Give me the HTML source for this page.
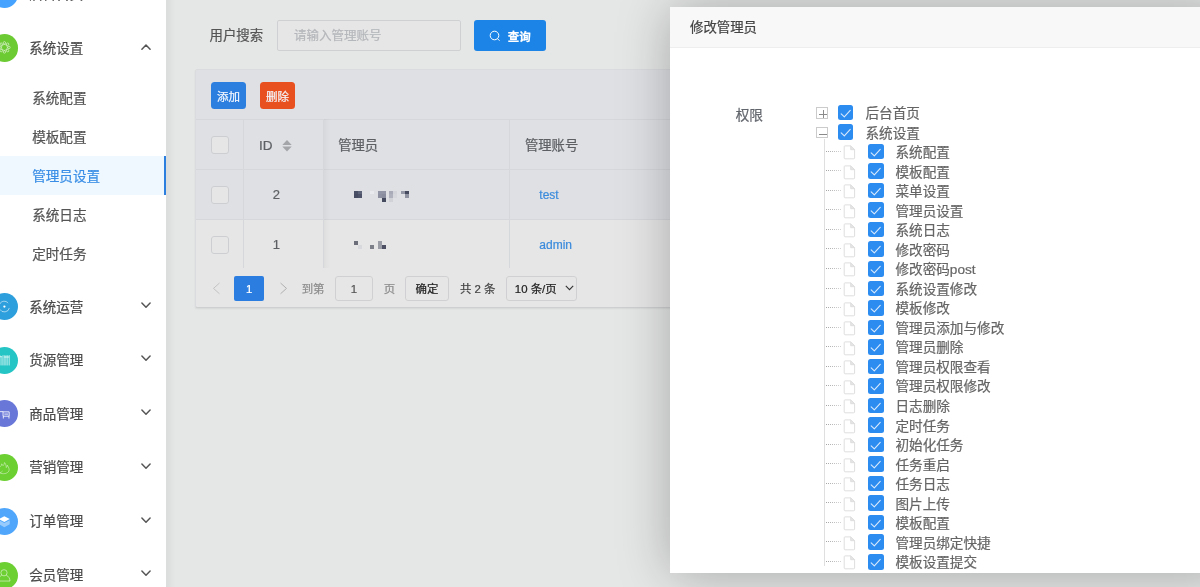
<!DOCTYPE html>
<html lang="zh-CN"><head><meta charset="utf-8"><title>管理员设置</title>
<style>
*{margin:0;padding:0;box-sizing:border-box}
html,body{width:1200px;height:587px;overflow:hidden}
body{position:relative;background:#e5e6e6;font-family:"Liberation Sans","Noto Sans CJK SC",sans-serif;color:#555;-webkit-text-stroke:.22px currentColor}
i{font-style:normal;display:block}
span,svg,div{position:absolute}
#side{left:0;top:0;width:166px;height:587px;background:#fff;overflow:hidden}
.ic{left:-9.35px;width:27.2px;height:27.2px;border-radius:50%;overflow:hidden}
.ic svg{left:0;top:0}
.ml{left:29.2px;font-size:13.5px;line-height:20px;color:#4a4a4a;white-space:nowrap}
.sl{left:32.2px;font-size:13.6px;line-height:20px;color:#555;white-space:nowrap}
.sl.on{color:#3a8ee6}
.act{left:0;width:166px;height:38.9px;background:#eff8ff;border-right:2px solid #2d7fdf}
.chev{left:140.3px}
#main{left:166px;top:0;width:1034px;height:587px;overflow:hidden}
.lbl{left:209.5px;top:26px;font-size:13.4px;line-height:20px;color:#555;white-space:nowrap}
.inp{left:277px;top:19.5px;width:183.5px;height:31.3px;border:1px solid #cfd0d2;border-radius:2px;background:#e6e6e6}
.inp span{left:16px;top:5px;font-size:12.5px;line-height:20px;color:#b5b7bb;white-space:nowrap}
.sbtn{left:474.2px;top:19.5px;width:72.2px;height:31.7px;border-radius:3px;background:#1c84e6;color:#fff}
.sbtn span{left:33.5px;top:7px;font-size:11.5px;font-weight:bold;line-height:20px;white-space:nowrap}
.card{left:194.8px;top:68.5px;width:1010px;height:239.9px;background:#e6e6e6;border:1px solid #dadbde;border-bottom-color:#cecfd1;border-radius:2.5px;overflow:hidden;box-shadow:0 1px 2px rgba(0,0,0,.07)}
.tb{left:0;top:0;width:100%;height:50.5px;background:#dfe0e4;border-bottom:1px solid #d6d7db}
.hd{}
.btn{top:82px;width:35px;height:27.3px;border-radius:3.5px;color:#f4f8ff;font-size:11.5px;line-height:30px;text-align:center}
.r{left:195.8px;width:1010px;border-bottom:1px solid #d6d7db}
.vs{width:1px;background:#d6d7db;top:119.3px;height:148.5px}
.ck{left:211px;width:17.5px;height:17.5px;border:1px solid #cdced1;border-radius:3px;background:#e6e6e6}
.th{font-size:13.3px;line-height:20px;color:#5d6064;white-space:nowrap}
.td{font-size:13px;line-height:20px;color:#5d6064;white-space:nowrap}
.lk{font-size:12px;line-height:20px;color:#3b8bdc;white-space:nowrap}
.pg{font-size:11.4px;line-height:27px;white-space:nowrap;top:275.5px;height:25px}
.bx{border:1px solid #d0d0d2;border-radius:3px;background:#e6e6e6}
#modal{left:670px;top:7px;width:560px;height:565.9px;background:#fff;box-shadow:1px 1px 50px rgba(0,0,0,.28)}
#mh{left:0;top:0;width:100%;height:40.5px;background:#f8f8f8;border-bottom:1px solid #eee}
#mh span{left:20px;top:11.4px;font-size:13.4px;line-height:20px;color:#444;white-space:nowrap}
.cb{width:15.5px;height:15.5px;border-radius:2.5px;background:#2d8cf0}
.cb svg{left:0;top:0}
.pm{width:11.7px;height:11.5px;border:1px solid #cbcbcb;margin-top:-5.75px;background:#fff;overflow:hidden}
.pm .h{position:absolute;left:1.8px;top:5.8px;width:8.6px;height:1px;background:#8a8a8a}
.pm .v{position:absolute;left:5.6px;top:1.5px;width:1px;height:9px;background:#8a8a8a}
.tl{font-size:13.6px;line-height:20px;color:#666;white-space:nowrap}
i.hd{position:absolute;left:825.8px;width:15.6px;height:1px;background:linear-gradient(to right,rgba(255,255,255,0),rgba(255,255,255,.55)),repeating-linear-gradient(to right,#a4a4a4 0,#a4a4a4 1px,#fff 1px,#fff 2.05px)}
.doc{left:843.2px}
.vd{left:824px;top:138.6px;width:1px;height:427.5px;background:#dfdfdf}
#root{left:0;top:0;width:1200px;height:587px;overflow:hidden;will-change:transform}
</style></head><body><div id="root">
<div id="side">
<span class="ic" style="top:-19.70px;background:#45a3ff"><svg width="27.2" height="27.2" viewBox="0.200 0 28 28"></svg></span><span class="ml" style="top:-15.00px">后台首页</span><svg class="chev" style="top:-11.90px" width="12" height="8" viewBox="0 0 12 8"><path d="M1.900 2.100L6 6.300L10.100 2.100" fill="none" stroke="#555" stroke-width="1.5" stroke-linecap="round" stroke-linejoin="round"/></svg>
<span class="ic" style="top:34.40px;background:#6ccb33"><svg width="27.2" height="27.2" viewBox="0.200 0 28 28"><g fill="none" stroke="#fff" stroke-opacity=".68" stroke-width=".8"><circle cx="14" cy="13.8" r="3.1"/><circle cx="18.70" cy="13.80" r="1.25"/><circle cx="17.32" cy="17.12" r="1.25"/><circle cx="14.00" cy="18.50" r="1.25"/><circle cx="10.68" cy="17.12" r="1.25"/><circle cx="9.30" cy="13.80" r="1.25"/><circle cx="10.68" cy="10.48" r="1.25"/><circle cx="14.00" cy="9.10" r="1.25"/><circle cx="17.32" cy="10.48" r="1.25"/></g></svg></span><span class="ml" style="top:38.90px">系统设置</span><svg class="chev" style="top:42.90px" width="12" height="8" viewBox="0 0 12 8"><path d="M1.900 6.300L6 2.100L10.100 6.300" fill="none" stroke="#555" stroke-width="1.5" stroke-linecap="round" stroke-linejoin="round"/></svg>
<span class="sl" style="top:89.00px">系统配置</span>
<span class="sl" style="top:128.00px">模板配置</span>
<div class="act" style="top:156.4px"></div>
<span class="sl on" style="top:167.00px">管理员设置</span>
<span class="sl" style="top:206.00px">系统日志</span>
<span class="sl" style="top:245.00px">定时任务</span>
<span class="ic" style="top:293.10px;background:#2d9fdc"><svg width="27.2" height="27.2" viewBox="0.200 0 28 28"><g fill="none" stroke="#fff" stroke-opacity=".65" stroke-width=".9"><path d="M17.9 10.4A5.300 5.300 0 0 0 9 11.6"/><path d="M19.100 15.400A5.300 5.300 0 0 1 9.300 16.800"/></g><circle cx="14" cy="14" r="1.2" fill="#fff"/></svg></span><span class="ml" style="top:297.60px">系统运营</span><svg class="chev" style="top:300.90px" width="12" height="8" viewBox="0 0 12 8"><path d="M1.900 2.100L6 6.300L10.100 2.100" fill="none" stroke="#555" stroke-width="1.5" stroke-linecap="round" stroke-linejoin="round"/></svg>
<span class="ic" style="top:346.60px;background:#25c5c5"><svg width="27.2" height="27.2" viewBox="0.200 0 28 28"><g fill="none" stroke="#fff" stroke-opacity=".85"><path stroke-width=".9" d="M13.700 8.400v10.600M16.800 8.400v10.600M18.900 8.400v10.600M13.700 10.300h5.200M9.300 10h2.200M9.300 8.400v10.600"/><path stroke-width=".6" d="M12.200 8.600v10.400M15.300 8.600v10.400M10.800 10v9"/></g></svg></span><span class="ml" style="top:351.10px">货源管理</span><svg class="chev" style="top:354.40px" width="12" height="8" viewBox="0 0 12 8"><path d="M1.900 2.100L6 6.300L10.100 2.100" fill="none" stroke="#555" stroke-width="1.5" stroke-linecap="round" stroke-linejoin="round"/></svg>
<span class="ic" style="top:400.20px;background:#6877d8"><svg width="27.2" height="27.2" viewBox="0.200 0 28 28"><g fill="none" stroke="#fff" stroke-opacity=".85" stroke-width="1"><path d="M9.500 12h3.100v4.700h6.300v-4.500h-6.300"/><path d="M13.900 14.500h3.900"/><path d="M12.900 16.700v2.400M18.700 16.700v2.400"/></g></svg></span><span class="ml" style="top:404.70px">商品管理</span><svg class="chev" style="top:408.00px" width="12" height="8" viewBox="0 0 12 8"><path d="M1.900 2.100L6 6.300L10.100 2.100" fill="none" stroke="#555" stroke-width="1.5" stroke-linecap="round" stroke-linejoin="round"/></svg>
<span class="ic" style="top:453.70px;background:#6ccf32"><svg width="27.2" height="27.2" viewBox="0.200 0 28 28"><g fill="none" stroke="#fff" stroke-opacity=".5" stroke-width=".9" stroke-linejoin="round"><path d="M9 19.400C12 21 17.400 20.600 18.700 17.200C19.300 15.400 18.300 13.600 17 11.600C16.900 12.800 16.500 13.600 15.900 14C15.900 12 15.300 10 14.200 8.800C14.100 10.200 13.400 11.200 12.600 12C12.300 11.200 11.800 10.600 11.200 10.200C11.200 11.400 10.600 12.400 9.800 13.200"/><path d="M9.500 19.200c1.100-.3 2-.9 2.600-1.700"/></g></svg></span><span class="ml" style="top:458.20px">营销管理</span><svg class="chev" style="top:461.50px" width="12" height="8" viewBox="0 0 12 8"><path d="M1.900 2.100L6 6.300L10.100 2.100" fill="none" stroke="#555" stroke-width="1.5" stroke-linecap="round" stroke-linejoin="round"/></svg>
<span class="ic" style="top:507.70px;background:#4fa6fb"><svg width="27.2" height="27.2" viewBox="0.200 0 28 28"><path d="M13.900 8.500L19.500 11.400L13.900 14.300L8.300 11.400z" fill="#fff"/><path d="M8.300 12.600L13.900 15.500L19.500 12.600V16.700L13.900 19.700L8.300 16.700z" fill="#fff" fill-opacity=".42"/></svg></span><span class="ml" style="top:512.20px">订单管理</span><svg class="chev" style="top:515.50px" width="12" height="8" viewBox="0 0 12 8"><path d="M1.900 2.100L6 6.300L10.100 2.100" fill="none" stroke="#555" stroke-width="1.5" stroke-linecap="round" stroke-linejoin="round"/></svg>
<span class="ic" style="top:561.50px;background:#6ccf32"><svg width="27.2" height="27.2" viewBox="0.200 0 28 28"><g fill="none" stroke="#fff" stroke-opacity=".6" stroke-width=".9"><circle cx="13.600" cy="11.100" r="3.200"/><path d="M15.900 13.500C18.300 14.700 19.700 16.900 19.800 19.600H7.400C7.500 16.900 8.900 14.700 11.300 13.500"/></g></svg></span><span class="ml" style="top:566.00px">会员管理</span><svg class="chev" style="top:569.30px" width="12" height="8" viewBox="0 0 12 8"><path d="M1.900 2.100L6 6.300L10.100 2.100" fill="none" stroke="#555" stroke-width="1.5" stroke-linecap="round" stroke-linejoin="round"/></svg>
</div>
<div style="left:166px;top:0;width:9px;height:587px;background:linear-gradient(to right,rgba(0,0,0,.045),rgba(0,0,0,0))"></div>
<span class="lbl">用户搜索</span>
<div class="inp"><span>请输入管理账号</span></div>
<div class="sbtn"><svg style="left:15px;top:10.5px" width="12" height="12" viewBox="0 0 12 12"><circle cx="5.5" cy="5.5" r="4.3" fill="none" stroke="#fff" stroke-width="1"/><path d="M8.6 8.8l1.6 1.6" stroke="#fff" stroke-width="1" stroke-linecap="round"/></svg><span>查询</span></div>
<div class="card"><div class="tb"></div></div>
<div class="btn" style="left:211px;background:#2d7fdf">添加</div>
<div class="btn" style="left:260px;background:#e8501f">删除</div>
<div class="r" style="top:119.3px;height:50.3px;background:#dfe0e4;border-top:1px solid #d6d7db"></div>
<div class="r" style="top:169.6px;height:50px;background:#dfe0e4"></div>
<div class="r" style="top:219.6px;height:48.5px;background:#e6e6e6;border-bottom:0"></div>
<div style="left:195.8px;top:119.3px;width:400px;height:148.6px;overflow:hidden"><div style="left:-20px;top:-20px;width:147.700px;height:200px;box-shadow:1px 0 7px rgba(0,0,0,.075)"></div></div><div class="vs" style="left:243px"></div><div class="vs" style="left:323px"></div><div class="vs" style="left:509px"></div>
<div class="ck" style="top:136.3px"></div><div class="ck" style="top:186.3px"></div><div class="ck" style="top:236.3px"></div>
<span class="th" style="left:258.900px;top:136px;font-size:13.500px">ID</span>
<svg style="left:282px;top:139.5px" width="10" height="12" viewBox="0 0 10 12"><path d="M0.300 5L5 0L9.700 5z" fill="#a3a5a9"/><path d="M0.300 6.600L5 11.600L9.700 6.600z" fill="#a3a5a9"/></svg>
<span class="th" style="left:338.2px;top:136px">管理员</span>
<span class="th" style="left:525px;top:136px">管理账号</span>
<span class="td" style="left:272.7px;top:184.7px">2</span>
<span class="td" style="left:272.7px;top:234.700px">1</span>
<i style="position:absolute;left:354.30px;top:190.50px;width:3.96px;height:3.83px;background:#4a5066"></i><i style="position:absolute;left:358.21px;top:190.50px;width:3.96px;height:3.83px;background:#5d6378"></i><i style="position:absolute;left:354.30px;top:194.28px;width:3.96px;height:3.83px;background:#474c62"></i><i style="position:absolute;left:358.21px;top:194.28px;width:3.96px;height:3.83px;background:#4e5369"></i><i style="position:absolute;left:369.94px;top:190.50px;width:3.96px;height:3.83px;background:#e9eaed"></i><i style="position:absolute;left:377.76px;top:190.50px;width:3.96px;height:3.83px;background:#9295a5"></i><i style="position:absolute;left:381.67px;top:190.50px;width:3.96px;height:3.83px;background:#9295a5"></i><i style="position:absolute;left:377.76px;top:194.28px;width:3.96px;height:3.83px;background:#8e91a1"></i><i style="position:absolute;left:381.67px;top:194.28px;width:3.96px;height:3.83px;background:#8a8d9d"></i><i style="position:absolute;left:381.67px;top:198.06px;width:3.96px;height:3.83px;background:#454a5e"></i><i style="position:absolute;left:389.49px;top:190.50px;width:3.96px;height:3.83px;background:#a9acb8"></i><i style="position:absolute;left:389.49px;top:194.28px;width:3.96px;height:3.83px;background:#b0b3be"></i><i style="position:absolute;left:393.40px;top:190.50px;width:3.96px;height:3.83px;background:#d3d5da"></i><i style="position:absolute;left:393.40px;top:194.28px;width:3.96px;height:3.83px;background:#d6d8dd"></i><i style="position:absolute;left:389.49px;top:198.06px;width:3.96px;height:3.83px;background:#d0d2d8"></i><i style="position:absolute;left:401.22px;top:190.50px;width:3.96px;height:3.83px;background:#9497a6"></i><i style="position:absolute;left:405.13px;top:190.50px;width:3.96px;height:3.83px;background:#454a5e"></i><i style="position:absolute;left:405.13px;top:194.28px;width:3.96px;height:3.83px;background:#8f92a0"></i><i style="position:absolute;left:354.30px;top:241.20px;width:3.96px;height:3.83px;background:#6b6e78"></i><i style="position:absolute;left:358.21px;top:244.98px;width:3.96px;height:3.83px;background:#d8d9dc"></i><i style="position:absolute;left:369.94px;top:244.98px;width:3.96px;height:3.83px;background:#7c7f88"></i><i style="position:absolute;left:377.76px;top:241.20px;width:3.96px;height:3.83px;background:#9a9ca6"></i><i style="position:absolute;left:377.76px;top:244.98px;width:3.96px;height:3.83px;background:#9a9ca6"></i><i style="position:absolute;left:381.67px;top:244.98px;width:3.96px;height:3.83px;background:#4d5062"></i>
<span class="lk" style="left:539.3px;top:185px">test</span>
<span class="lk" style="left:539.3px;top:235px">admin</span>
<svg style="left:211.500px;top:282px" width="9" height="13" viewBox="0 0 9 13"><path d="M7.500 1L1.500 6.400L7.500 11.800" fill="none" stroke="#c2c2c2" stroke-width="1"/></svg>
<div class="pg" style="left:234.3px;width:29.7px;background:#2b7de0;color:#fff;text-align:center;border-radius:2px">1</div>
<svg style="left:278.500px;top:282px" width="9" height="13" viewBox="0 0 9 13"><path d="M1.500 1L7.500 6.400L1.500 11.800" fill="none" stroke="#b0b0b0" stroke-width="1"/></svg>
<span class="pg" style="left:301.700px;color:#8c8c8c">到第</span>
<div class="pg bx" style="left:335px;width:38px;text-align:center;color:#555;line-height:25px">1</div>
<span class="pg" style="left:383.700px;color:#8c8c8c">页</span>
<div class="pg bx" style="left:404.500px;width:44.800px;text-align:center;color:#222;line-height:25px">确定</div>
<span class="pg" style="left:460px;color:#444">共 2 条</span>
<div class="pg bx" style="left:506.300px;width:70.500px;color:#222;line-height:25px"><span style="left:7.500px;top:0;position:absolute">10 条/页</span><svg style="left:57.500px;top:8.500px" width="9" height="6" viewBox="0 0 9 6"><path d="M0.800 0.800L4.500 4.600L8.200 0.800" fill="none" stroke="#333" stroke-width="1.100"/></svg></div>
<div id="modal"><div id="mh"><span>修改管理员</span></div></div>
<span class="tl" style="left:735.7px;top:105.9px;color:#62666c">权限</span>
<i class="vd" style="position:absolute"></i>
<span class="pm" style="left:816.3px;top:113.00px"><i class="h"></i><i class="v"></i></span>
<span class="cb" style="left:837.9px;top:104.65px"><svg viewBox="0 0 15.2 15.2" width="15.5" height="15.5"><path d="M3.1 8.6l3.1 3 5.8-6.4" fill="none" stroke="#fff" stroke-opacity=".82" stroke-width="1.05" stroke-linecap="round" stroke-linejoin="round"/></svg></span>
<span class="tl" style="left:865.5px;top:104.00px">后台首页</span>
<span class="pm" style="left:816.3px;top:132.53px"><i class="h"></i></span>
<span class="cb" style="left:837.9px;top:124.18px"><svg viewBox="0 0 15.2 15.2" width="15.5" height="15.5"><path d="M3.1 8.6l3.1 3 5.8-6.4" fill="none" stroke="#fff" stroke-opacity=".82" stroke-width="1.05" stroke-linecap="round" stroke-linejoin="round"/></svg></span>
<span class="tl" style="left:865.5px;top:123.53px">系统设置</span>
<i class="hd" style="top:150.77px"></i>
<svg class="doc" style="top:145.27px" width="13" height="15" viewBox="0 0 13 15"><path d="M2 .9h5.700L11.600 4.700V13q0 .8-.8.8H2q-.8 0-.8-.8V1.700q0-.8.8-.8z" fill="#fff" stroke="#dedede" stroke-width="1"/><path d="M7.700 .9v3.800h3.900z" fill="#e6e6e6" stroke="#dedede" stroke-width="1" stroke-linejoin="round"/></svg>
<span class="cb" style="left:868px;top:143.82px"><svg viewBox="0 0 15.2 15.2" width="15.5" height="15.5"><path d="M3.1 8.6l3.1 3 5.8-6.4" fill="none" stroke="#fff" stroke-opacity=".82" stroke-width="1.05" stroke-linecap="round" stroke-linejoin="round"/></svg></span>
<span class="tl" style="left:895.5px;top:143.07px">系统配置</span>
<i class="hd" style="top:170.30px"></i>
<svg class="doc" style="top:164.80px" width="13" height="15" viewBox="0 0 13 15"><path d="M2 .9h5.700L11.600 4.700V13q0 .8-.8.8H2q-.8 0-.8-.8V1.700q0-.8.8-.8z" fill="#fff" stroke="#dedede" stroke-width="1"/><path d="M7.700 .9v3.800h3.900z" fill="#e6e6e6" stroke="#dedede" stroke-width="1" stroke-linejoin="round"/></svg>
<span class="cb" style="left:868px;top:163.35px"><svg viewBox="0 0 15.2 15.2" width="15.5" height="15.5"><path d="M3.1 8.6l3.1 3 5.8-6.4" fill="none" stroke="#fff" stroke-opacity=".82" stroke-width="1.05" stroke-linecap="round" stroke-linejoin="round"/></svg></span>
<span class="tl" style="left:895.5px;top:162.60px">模板配置</span>
<i class="hd" style="top:189.83px"></i>
<svg class="doc" style="top:184.33px" width="13" height="15" viewBox="0 0 13 15"><path d="M2 .9h5.700L11.600 4.700V13q0 .8-.8.8H2q-.8 0-.8-.8V1.700q0-.8.8-.8z" fill="#fff" stroke="#dedede" stroke-width="1"/><path d="M7.700 .9v3.800h3.900z" fill="#e6e6e6" stroke="#dedede" stroke-width="1" stroke-linejoin="round"/></svg>
<span class="cb" style="left:868px;top:182.88px"><svg viewBox="0 0 15.2 15.2" width="15.5" height="15.5"><path d="M3.1 8.6l3.1 3 5.8-6.4" fill="none" stroke="#fff" stroke-opacity=".82" stroke-width="1.05" stroke-linecap="round" stroke-linejoin="round"/></svg></span>
<span class="tl" style="left:895.5px;top:182.13px">菜单设置</span>
<i class="hd" style="top:209.37px"></i>
<svg class="doc" style="top:203.87px" width="13" height="15" viewBox="0 0 13 15"><path d="M2 .9h5.700L11.600 4.700V13q0 .8-.8.8H2q-.8 0-.8-.8V1.700q0-.8.8-.8z" fill="#fff" stroke="#dedede" stroke-width="1"/><path d="M7.700 .9v3.800h3.900z" fill="#e6e6e6" stroke="#dedede" stroke-width="1" stroke-linejoin="round"/></svg>
<span class="cb" style="left:868px;top:202.42px"><svg viewBox="0 0 15.2 15.2" width="15.5" height="15.5"><path d="M3.1 8.6l3.1 3 5.8-6.4" fill="none" stroke="#fff" stroke-opacity=".82" stroke-width="1.05" stroke-linecap="round" stroke-linejoin="round"/></svg></span>
<span class="tl" style="left:895.5px;top:201.67px">管理员设置</span>
<i class="hd" style="top:228.90px"></i>
<svg class="doc" style="top:223.40px" width="13" height="15" viewBox="0 0 13 15"><path d="M2 .9h5.700L11.600 4.700V13q0 .8-.8.8H2q-.8 0-.8-.8V1.700q0-.8.8-.8z" fill="#fff" stroke="#dedede" stroke-width="1"/><path d="M7.700 .9v3.800h3.900z" fill="#e6e6e6" stroke="#dedede" stroke-width="1" stroke-linejoin="round"/></svg>
<span class="cb" style="left:868px;top:221.95px"><svg viewBox="0 0 15.2 15.2" width="15.5" height="15.5"><path d="M3.1 8.6l3.1 3 5.8-6.4" fill="none" stroke="#fff" stroke-opacity=".82" stroke-width="1.05" stroke-linecap="round" stroke-linejoin="round"/></svg></span>
<span class="tl" style="left:895.5px;top:221.20px">系统日志</span>
<i class="hd" style="top:248.43px"></i>
<svg class="doc" style="top:242.93px" width="13" height="15" viewBox="0 0 13 15"><path d="M2 .9h5.700L11.600 4.700V13q0 .8-.8.8H2q-.8 0-.8-.8V1.700q0-.8.8-.8z" fill="#fff" stroke="#dedede" stroke-width="1"/><path d="M7.700 .9v3.800h3.900z" fill="#e6e6e6" stroke="#dedede" stroke-width="1" stroke-linejoin="round"/></svg>
<span class="cb" style="left:868px;top:241.48px"><svg viewBox="0 0 15.2 15.2" width="15.5" height="15.5"><path d="M3.1 8.6l3.1 3 5.8-6.4" fill="none" stroke="#fff" stroke-opacity=".82" stroke-width="1.05" stroke-linecap="round" stroke-linejoin="round"/></svg></span>
<span class="tl" style="left:895.5px;top:240.73px">修改密码</span>
<i class="hd" style="top:267.96px"></i>
<svg class="doc" style="top:262.46px" width="13" height="15" viewBox="0 0 13 15"><path d="M2 .9h5.700L11.600 4.700V13q0 .8-.8.8H2q-.8 0-.8-.8V1.700q0-.8.8-.8z" fill="#fff" stroke="#dedede" stroke-width="1"/><path d="M7.700 .9v3.800h3.900z" fill="#e6e6e6" stroke="#dedede" stroke-width="1" stroke-linejoin="round"/></svg>
<span class="cb" style="left:868px;top:261.01px"><svg viewBox="0 0 15.2 15.2" width="15.5" height="15.5"><path d="M3.1 8.6l3.1 3 5.8-6.4" fill="none" stroke="#fff" stroke-opacity=".82" stroke-width="1.05" stroke-linecap="round" stroke-linejoin="round"/></svg></span>
<span class="tl" style="left:895.5px;top:260.26px">修改密码post</span>
<i class="hd" style="top:287.50px"></i>
<svg class="doc" style="top:282.00px" width="13" height="15" viewBox="0 0 13 15"><path d="M2 .9h5.700L11.600 4.700V13q0 .8-.8.8H2q-.8 0-.8-.8V1.700q0-.8.8-.8z" fill="#fff" stroke="#dedede" stroke-width="1"/><path d="M7.700 .9v3.800h3.900z" fill="#e6e6e6" stroke="#dedede" stroke-width="1" stroke-linejoin="round"/></svg>
<span class="cb" style="left:868px;top:280.55px"><svg viewBox="0 0 15.2 15.2" width="15.5" height="15.5"><path d="M3.1 8.6l3.1 3 5.8-6.4" fill="none" stroke="#fff" stroke-opacity=".82" stroke-width="1.05" stroke-linecap="round" stroke-linejoin="round"/></svg></span>
<span class="tl" style="left:895.5px;top:279.80px">系统设置修改</span>
<i class="hd" style="top:307.03px"></i>
<svg class="doc" style="top:301.53px" width="13" height="15" viewBox="0 0 13 15"><path d="M2 .9h5.700L11.600 4.700V13q0 .8-.8.8H2q-.8 0-.8-.8V1.700q0-.8.8-.8z" fill="#fff" stroke="#dedede" stroke-width="1"/><path d="M7.700 .9v3.800h3.900z" fill="#e6e6e6" stroke="#dedede" stroke-width="1" stroke-linejoin="round"/></svg>
<span class="cb" style="left:868px;top:300.08px"><svg viewBox="0 0 15.2 15.2" width="15.5" height="15.5"><path d="M3.1 8.6l3.1 3 5.8-6.4" fill="none" stroke="#fff" stroke-opacity=".82" stroke-width="1.05" stroke-linecap="round" stroke-linejoin="round"/></svg></span>
<span class="tl" style="left:895.5px;top:299.33px">模板修改</span>
<i class="hd" style="top:326.56px"></i>
<svg class="doc" style="top:321.06px" width="13" height="15" viewBox="0 0 13 15"><path d="M2 .9h5.700L11.600 4.700V13q0 .8-.8.8H2q-.8 0-.8-.8V1.700q0-.8.8-.8z" fill="#fff" stroke="#dedede" stroke-width="1"/><path d="M7.700 .9v3.800h3.900z" fill="#e6e6e6" stroke="#dedede" stroke-width="1" stroke-linejoin="round"/></svg>
<span class="cb" style="left:868px;top:319.61px"><svg viewBox="0 0 15.2 15.2" width="15.5" height="15.5"><path d="M3.1 8.6l3.1 3 5.8-6.4" fill="none" stroke="#fff" stroke-opacity=".82" stroke-width="1.05" stroke-linecap="round" stroke-linejoin="round"/></svg></span>
<span class="tl" style="left:895.5px;top:318.86px">管理员添加与修改</span>
<i class="hd" style="top:346.10px"></i>
<svg class="doc" style="top:340.60px" width="13" height="15" viewBox="0 0 13 15"><path d="M2 .9h5.700L11.600 4.700V13q0 .8-.8.8H2q-.8 0-.8-.8V1.700q0-.8.8-.8z" fill="#fff" stroke="#dedede" stroke-width="1"/><path d="M7.700 .9v3.800h3.900z" fill="#e6e6e6" stroke="#dedede" stroke-width="1" stroke-linejoin="round"/></svg>
<span class="cb" style="left:868px;top:339.15px"><svg viewBox="0 0 15.2 15.2" width="15.5" height="15.5"><path d="M3.1 8.6l3.1 3 5.8-6.4" fill="none" stroke="#fff" stroke-opacity=".82" stroke-width="1.05" stroke-linecap="round" stroke-linejoin="round"/></svg></span>
<span class="tl" style="left:895.5px;top:338.40px">管理员删除</span>
<i class="hd" style="top:365.63px"></i>
<svg class="doc" style="top:360.13px" width="13" height="15" viewBox="0 0 13 15"><path d="M2 .9h5.700L11.600 4.700V13q0 .8-.8.8H2q-.8 0-.8-.8V1.700q0-.8.8-.8z" fill="#fff" stroke="#dedede" stroke-width="1"/><path d="M7.700 .9v3.800h3.900z" fill="#e6e6e6" stroke="#dedede" stroke-width="1" stroke-linejoin="round"/></svg>
<span class="cb" style="left:868px;top:358.68px"><svg viewBox="0 0 15.2 15.2" width="15.5" height="15.5"><path d="M3.1 8.6l3.1 3 5.8-6.4" fill="none" stroke="#fff" stroke-opacity=".82" stroke-width="1.05" stroke-linecap="round" stroke-linejoin="round"/></svg></span>
<span class="tl" style="left:895.5px;top:357.93px">管理员权限查看</span>
<i class="hd" style="top:385.16px"></i>
<svg class="doc" style="top:379.66px" width="13" height="15" viewBox="0 0 13 15"><path d="M2 .9h5.700L11.600 4.700V13q0 .8-.8.8H2q-.8 0-.8-.8V1.700q0-.8.8-.8z" fill="#fff" stroke="#dedede" stroke-width="1"/><path d="M7.700 .9v3.800h3.900z" fill="#e6e6e6" stroke="#dedede" stroke-width="1" stroke-linejoin="round"/></svg>
<span class="cb" style="left:868px;top:378.21px"><svg viewBox="0 0 15.2 15.2" width="15.5" height="15.5"><path d="M3.1 8.6l3.1 3 5.8-6.4" fill="none" stroke="#fff" stroke-opacity=".82" stroke-width="1.05" stroke-linecap="round" stroke-linejoin="round"/></svg></span>
<span class="tl" style="left:895.5px;top:377.46px">管理员权限修改</span>
<i class="hd" style="top:404.69px"></i>
<svg class="doc" style="top:399.19px" width="13" height="15" viewBox="0 0 13 15"><path d="M2 .9h5.700L11.600 4.700V13q0 .8-.8.8H2q-.8 0-.8-.8V1.700q0-.8.8-.8z" fill="#fff" stroke="#dedede" stroke-width="1"/><path d="M7.700 .9v3.800h3.900z" fill="#e6e6e6" stroke="#dedede" stroke-width="1" stroke-linejoin="round"/></svg>
<span class="cb" style="left:868px;top:397.75px"><svg viewBox="0 0 15.2 15.2" width="15.5" height="15.5"><path d="M3.1 8.6l3.1 3 5.8-6.4" fill="none" stroke="#fff" stroke-opacity=".82" stroke-width="1.05" stroke-linecap="round" stroke-linejoin="round"/></svg></span>
<span class="tl" style="left:895.5px;top:397.00px">日志删除</span>
<i class="hd" style="top:424.23px"></i>
<svg class="doc" style="top:418.73px" width="13" height="15" viewBox="0 0 13 15"><path d="M2 .9h5.700L11.600 4.700V13q0 .8-.8.8H2q-.8 0-.8-.8V1.700q0-.8.8-.8z" fill="#fff" stroke="#dedede" stroke-width="1"/><path d="M7.700 .9v3.800h3.900z" fill="#e6e6e6" stroke="#dedede" stroke-width="1" stroke-linejoin="round"/></svg>
<span class="cb" style="left:868px;top:417.28px"><svg viewBox="0 0 15.2 15.2" width="15.5" height="15.5"><path d="M3.1 8.6l3.1 3 5.8-6.4" fill="none" stroke="#fff" stroke-opacity=".82" stroke-width="1.05" stroke-linecap="round" stroke-linejoin="round"/></svg></span>
<span class="tl" style="left:895.5px;top:416.53px">定时任务</span>
<i class="hd" style="top:443.76px"></i>
<svg class="doc" style="top:438.26px" width="13" height="15" viewBox="0 0 13 15"><path d="M2 .9h5.700L11.600 4.700V13q0 .8-.8.8H2q-.8 0-.8-.8V1.700q0-.8.8-.8z" fill="#fff" stroke="#dedede" stroke-width="1"/><path d="M7.700 .9v3.800h3.900z" fill="#e6e6e6" stroke="#dedede" stroke-width="1" stroke-linejoin="round"/></svg>
<span class="cb" style="left:868px;top:436.81px"><svg viewBox="0 0 15.2 15.2" width="15.5" height="15.5"><path d="M3.1 8.6l3.1 3 5.8-6.4" fill="none" stroke="#fff" stroke-opacity=".82" stroke-width="1.05" stroke-linecap="round" stroke-linejoin="round"/></svg></span>
<span class="tl" style="left:895.5px;top:436.06px">初始化任务</span>
<i class="hd" style="top:463.29px"></i>
<svg class="doc" style="top:457.79px" width="13" height="15" viewBox="0 0 13 15"><path d="M2 .9h5.700L11.600 4.700V13q0 .8-.8.8H2q-.8 0-.8-.8V1.700q0-.8.8-.8z" fill="#fff" stroke="#dedede" stroke-width="1"/><path d="M7.700 .9v3.800h3.900z" fill="#e6e6e6" stroke="#dedede" stroke-width="1" stroke-linejoin="round"/></svg>
<span class="cb" style="left:868px;top:456.34px"><svg viewBox="0 0 15.2 15.2" width="15.5" height="15.5"><path d="M3.1 8.6l3.1 3 5.8-6.4" fill="none" stroke="#fff" stroke-opacity=".82" stroke-width="1.05" stroke-linecap="round" stroke-linejoin="round"/></svg></span>
<span class="tl" style="left:895.5px;top:455.59px">任务重启</span>
<i class="hd" style="top:482.83px"></i>
<svg class="doc" style="top:477.33px" width="13" height="15" viewBox="0 0 13 15"><path d="M2 .9h5.700L11.600 4.700V13q0 .8-.8.8H2q-.8 0-.8-.8V1.700q0-.8.8-.8z" fill="#fff" stroke="#dedede" stroke-width="1"/><path d="M7.700 .9v3.800h3.900z" fill="#e6e6e6" stroke="#dedede" stroke-width="1" stroke-linejoin="round"/></svg>
<span class="cb" style="left:868px;top:475.88px"><svg viewBox="0 0 15.2 15.2" width="15.5" height="15.5"><path d="M3.1 8.6l3.1 3 5.8-6.4" fill="none" stroke="#fff" stroke-opacity=".82" stroke-width="1.05" stroke-linecap="round" stroke-linejoin="round"/></svg></span>
<span class="tl" style="left:895.5px;top:475.13px">任务日志</span>
<i class="hd" style="top:502.36px"></i>
<svg class="doc" style="top:496.86px" width="13" height="15" viewBox="0 0 13 15"><path d="M2 .9h5.700L11.600 4.700V13q0 .8-.8.8H2q-.8 0-.8-.8V1.700q0-.8.8-.8z" fill="#fff" stroke="#dedede" stroke-width="1"/><path d="M7.700 .9v3.800h3.900z" fill="#e6e6e6" stroke="#dedede" stroke-width="1" stroke-linejoin="round"/></svg>
<span class="cb" style="left:868px;top:495.41px"><svg viewBox="0 0 15.2 15.2" width="15.5" height="15.5"><path d="M3.1 8.6l3.1 3 5.8-6.4" fill="none" stroke="#fff" stroke-opacity=".82" stroke-width="1.05" stroke-linecap="round" stroke-linejoin="round"/></svg></span>
<span class="tl" style="left:895.5px;top:494.66px">图片上传</span>
<i class="hd" style="top:521.89px"></i>
<svg class="doc" style="top:516.39px" width="13" height="15" viewBox="0 0 13 15"><path d="M2 .9h5.700L11.600 4.700V13q0 .8-.8.8H2q-.8 0-.8-.8V1.700q0-.8.8-.8z" fill="#fff" stroke="#dedede" stroke-width="1"/><path d="M7.700 .9v3.800h3.900z" fill="#e6e6e6" stroke="#dedede" stroke-width="1" stroke-linejoin="round"/></svg>
<span class="cb" style="left:868px;top:514.94px"><svg viewBox="0 0 15.2 15.2" width="15.5" height="15.5"><path d="M3.1 8.6l3.1 3 5.8-6.4" fill="none" stroke="#fff" stroke-opacity=".82" stroke-width="1.05" stroke-linecap="round" stroke-linejoin="round"/></svg></span>
<span class="tl" style="left:895.5px;top:514.19px">模板配置</span>
<i class="hd" style="top:541.43px"></i>
<svg class="doc" style="top:535.93px" width="13" height="15" viewBox="0 0 13 15"><path d="M2 .9h5.700L11.600 4.700V13q0 .8-.8.8H2q-.8 0-.8-.8V1.700q0-.8.8-.8z" fill="#fff" stroke="#dedede" stroke-width="1"/><path d="M7.700 .9v3.800h3.900z" fill="#e6e6e6" stroke="#dedede" stroke-width="1" stroke-linejoin="round"/></svg>
<span class="cb" style="left:868px;top:534.48px"><svg viewBox="0 0 15.2 15.2" width="15.5" height="15.5"><path d="M3.1 8.6l3.1 3 5.8-6.4" fill="none" stroke="#fff" stroke-opacity=".82" stroke-width="1.05" stroke-linecap="round" stroke-linejoin="round"/></svg></span>
<span class="tl" style="left:895.5px;top:533.73px">管理员绑定快捷</span>
<i class="hd" style="top:560.96px"></i>
<svg class="doc" style="top:555.46px" width="13" height="15" viewBox="0 0 13 15"><path d="M2 .9h5.700L11.600 4.700V13q0 .8-.8.8H2q-.8 0-.8-.8V1.700q0-.8.8-.8z" fill="#fff" stroke="#dedede" stroke-width="1"/><path d="M7.700 .9v3.800h3.900z" fill="#e6e6e6" stroke="#dedede" stroke-width="1" stroke-linejoin="round"/></svg>
<span class="cb" style="left:868px;top:554.01px"><svg viewBox="0 0 15.2 15.2" width="15.5" height="15.5"><path d="M3.1 8.6l3.1 3 5.8-6.4" fill="none" stroke="#fff" stroke-opacity=".82" stroke-width="1.05" stroke-linecap="round" stroke-linejoin="round"/></svg></span>
<span class="tl" style="left:895.5px;top:553.26px">模板设置提交</span>
</div></body></html>
